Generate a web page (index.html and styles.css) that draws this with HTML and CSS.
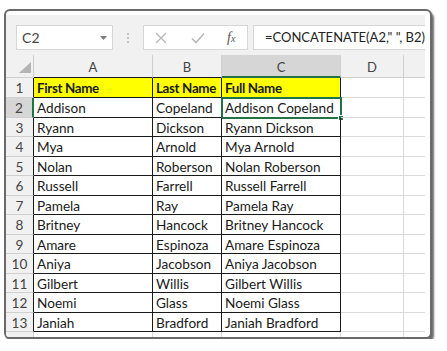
FILE: index.html
```html
<!DOCTYPE html>
<html>
<head>
<meta charset="utf-8">
<link rel="stylesheet" href="styles.css">
</head>
<body>
<div class="window">
  <div class="app">
    <div class="toolbar">
      <div class="namebox"><span class="ref">C2</span><svg class="caret" width="7" height="4" viewBox="0 0 7 4"><path d="M0 0H7L3.5 4Z" fill="#7a7a7a"/></svg></div>
      <div class="dots"><i></i><i></i><i></i></div>
      <div class="fbtns">
        <svg class="ico" width="12" height="12" viewBox="0 0 12 12"><path d="M1 1L11 11M11 1L1 11" stroke="#b8b8b8" stroke-width="1.4" fill="none"/></svg>
        <svg class="ico" width="14" height="12" viewBox="0 0 14 12"><path d="M1 6.5L5 10.5L13 1.5" stroke="#b8b8b8" stroke-width="1.6" fill="none"/></svg>
        <span class="fx">f<span class="fxx">x</span></span>
      </div>
      <div class="formula">=CONCATENATE(A2," ", B2)</div>
    </div>
    <div class="sheet">
      <div class="c corner"><svg width="12" height="11" viewBox="0 0 12 11"><path d="M12 0V11H0Z" fill="#b4b4b4"/></svg></div>
      <div class="c ch dk">A</div><div class="c ch dk">B</div><div class="c ch dk sel-ch">C</div><div class="c ch">D</div><div class="c ch last"></div>

      <div class="c rh">1</div><div class="c d y">First Name</div><div class="c d y">Last Name</div><div class="c d y">Full Name</div><div class="c e"></div><div class="c e last"></div>
      <div class="c rh sel-rh">2</div><div class="c d">Addison</div><div class="c d">Copeland</div><div class="c d cur">Addison Copeland<span class="handle"></span></div><div class="c e"></div><div class="c e last"></div>
      <div class="c rh">3</div><div class="c d">Ryann</div><div class="c d">Dickson</div><div class="c d">Ryann Dickson</div><div class="c e"></div><div class="c e last"></div>
      <div class="c rh">4</div><div class="c d">Mya</div><div class="c d">Arnold</div><div class="c d">Mya Arnold</div><div class="c e"></div><div class="c e last"></div>
      <div class="c rh">5</div><div class="c d">Nolan</div><div class="c d">Roberson</div><div class="c d">Nolan Roberson</div><div class="c e"></div><div class="c e last"></div>
      <div class="c rh">6</div><div class="c d">Russell</div><div class="c d">Farrell</div><div class="c d">Russell Farrell</div><div class="c e"></div><div class="c e last"></div>
      <div class="c rh">7</div><div class="c d">Pamela</div><div class="c d">Ray</div><div class="c d">Pamela Ray</div><div class="c e"></div><div class="c e last"></div>
      <div class="c rh">8</div><div class="c d">Britney</div><div class="c d">Hancock</div><div class="c d">Britney Hancock</div><div class="c e"></div><div class="c e last"></div>
      <div class="c rh">9</div><div class="c d">Amare</div><div class="c d">Espinoza</div><div class="c d">Amare Espinoza</div><div class="c e"></div><div class="c e last"></div>
      <div class="c rh">10</div><div class="c d">Aniya</div><div class="c d">Jacobson</div><div class="c d">Aniya Jacobson</div><div class="c e"></div><div class="c e last"></div>
      <div class="c rh">11</div><div class="c d">Gilbert</div><div class="c d">Willis</div><div class="c d">Gilbert Willis</div><div class="c e"></div><div class="c e last"></div>
      <div class="c rh">12</div><div class="c d">Noemi</div><div class="c d">Glass</div><div class="c d">Noemi Glass</div><div class="c e"></div><div class="c e last"></div>
      <div class="c rh">13</div><div class="c d">Janiah</div><div class="c d">Bradford</div><div class="c d">Janiah Bradford</div><div class="c e"></div><div class="c e last"></div>
      <div class="c rh plain"></div><div class="c e"></div><div class="c e"></div><div class="c e"></div><div class="c e"></div><div class="c e last"></div>
    </div>
  </div>
</div>
</body>
</html>
```
FILE: styles.css
```css
* { box-sizing: border-box; }
html, body { margin: 0; padding: 0; background: #fff; }
body { font-family: "Lato", "Liberation Sans", sans-serif; }

.window {
  margin: 9px 0 0 4px;
  width: 428px;
  height: 330px;
  border: 2px solid #6a6a6a;
  border-radius: 6px;
  box-shadow: 2px 3px 2px #6e6e6e;
  background: #fff;
  padding: 4px 5px 0 0;
  overflow: hidden;
}
.app {
  background: #f1f1f1;
  height: 100%;
  overflow: hidden;
}
.toolbar {
  height: 40px;
  display: flex;
  align-items: flex-start;
  padding-top: 10px;
}
.namebox {
  flex: none;
  margin-left: 10px;
  width: 97px;
  height: 25px;
  background: #fff;
  border: 1px solid #d6d6d6;
  display: flex;
  align-items: center;
  justify-content: space-between;
  padding: 0 5px 0 5px;
  font-size: 14px;
  color: #444;
}
.ref { letter-spacing: 0.2px; }
.caret { margin-top: 1px; }
.dots {
  flex: none;
  width: 30px;
  height: 25px;
  display: flex;
  flex-direction: column;
  align-items: center;
  justify-content: center;
  gap: 2px;
}
.dots i { width: 2px; height: 2px; background: #c4c4c4; display: block; }
.fbtns {
  flex: none;
  width: 105px;
  height: 25px;
  background: #fff;
  border: 1px solid #d6d6d6;
  display: flex;
  align-items: center;
  padding-left: 11px;
}
.fbtns .ico:first-child { margin-right: 24px; }
.fbtns .ico + .ico { margin-right: 22px; }
.fx {
  font-family: "Liberation Serif", "DejaVu Serif", serif;
  font-style: italic;
  font-size: 14px;
  color: #555;
}
.fxx { font-size: 10px; }
.formula {
  flex: 1;
  min-width: 0;
  overflow: hidden;
  margin-left: 5px;
  height: 25px;
  background: #fff;
  border: 1px solid #d6d6d6;
  border-right: none;
  padding-left: 11px;
  font-size: 13px;
  line-height: 23px;
  color: #222;
  white-space: nowrap;
}

.sheet {
  display: grid;
  grid-template-columns: 28px 119px 69px 119px 63px 1fr;
  grid-template-rows: 23px 20px 20px 19px 20px 19px 20px 19px 20px 19px 20px 19px 20px 19px 20px;
  background: #fff;
}
.c {
  border-right: 1px solid #dadada;
  border-bottom: 1px solid #dadada;
  font-size: 13.6px;
  line-height: 18px;
  padding-top: 1px;
  color: #1a1a1a;
  padding-left: 3px;
  white-space: nowrap;
  overflow: visible;
  position: relative;
}
.c.last { border-right: none; }
.corner {
  background: #f1f1f1;
  border-right: 1px solid #cfcfcf;
  border-bottom: 1px solid #cfcfcf;
  display: flex;
  align-items: flex-end;
  justify-content: flex-end;
  padding: 0 2px 4px 0;
}
.ch {
  background: #f1f1f1;
  border-right: 1px solid #cfcfcf;
  border-bottom: 1px solid #cfcfcf;
  text-align: center;
  padding: 3px 0 0 0;
  font-size: 13px;
  color: #444;
}
.ch.dk { border-bottom-color: #1a1a1a; }
.ch.sel-ch {
  background: #d6d6d6;
  border-bottom: 2px solid #217346;
}
.rh {
  background: #f1f1f1;
  border-right: 1px solid #1a1a1a;
  border-bottom: 1px solid #d0d0d0;
  text-align: center;
  padding: 1px 0 0 0;
  font-size: 13.6px;
  color: #444;
}
.rh.plain { border-right-color: #cfcfcf; }
.rh.sel-rh {
  background: #d6d6d6;
  border-right: 2px solid #217346;
}
.d {
  border-right: 1px solid #1a1a1a;
  border-bottom: 1px solid #1a1a1a;
}
.y {
  background: #ffff00;
  font-weight: bold;
  font-size: 13.4px;
  letter-spacing: -0.35px;
}
.cur { outline: 2px solid #217346; outline-offset: -1px; }
.handle {
  position: absolute;
  right: -4px;
  bottom: -4px;
  width: 6px;
  height: 6px;
  background: #217346;
  border: 1px solid #fff;
}
```
